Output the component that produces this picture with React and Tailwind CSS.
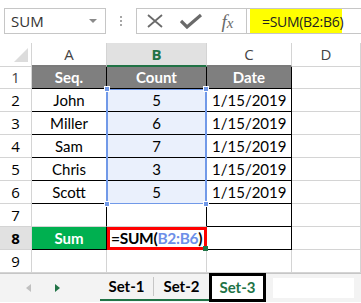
import React from 'react';

const COLS = ['A', 'B', 'C', 'D'];

const data = [
  ['John', '5', '1/15/2019'],
  ['Miller', '6', '1/15/2019'],
  ['Sam', '7', '1/15/2019'],
  ['Chris', '3', '1/15/2019'],
  ['Scott', '5', '1/15/2019'],
];

// Top formula bar
const FormulaBar = () => (
  <div className="h-[43px] flex items-start pt-[8px] pl-[4px]">
    <div className="w-[102px] h-[26px] border border-[#c6c6c6] flex items-center justify-between pl-[6px] pr-[8px]">
      <span className="text-[15px] text-[#333] font-['Open_Sans',sans-serif]">SUM</span>
      <span className="w-0 h-0 border-l-[4px] border-r-[4px] border-t-[4px] border-l-transparent border-r-transparent border-t-[#8a8a8a]" />
    </div>
    <div className="w-[30px] h-[26px] flex flex-col items-center justify-center gap-[2px]">
      <span className="w-[2px] h-[2px] bg-[#a6a6a6]" />
      <span className="w-[2px] h-[2px] bg-[#a6a6a6]" />
      <span className="w-[2px] h-[2px] bg-[#a6a6a6]" />
    </div>
    <div className="flex-1 h-[26px] border border-r-0 border-[#c6c6c6] flex items-center">
      <div className="w-[36px] flex justify-center">
        <svg width="18" height="14" viewBox="0 0 18 14">
          <path d="M2 1 L16 13 M16 1 L2 13" stroke="#6a6a6a" strokeWidth="1.8" fill="none" />
        </svg>
      </div>
      <div className="w-[36px] flex justify-center">
        <svg width="22" height="16" viewBox="0 0 22 16">
          <path d="M1 8 L7 14 L21 2" stroke="#6a6a6a" strokeWidth="3.2" fill="none" />
        </svg>
      </div>
      <div className="w-[38px] h-full flex items-center justify-center border-r border-[#c6c6c6]">
        <span className="text-[19px] italic text-[#6a6a6a] font-['Liberation_Serif',serif] leading-none">
          f<span className="text-[15px]">x</span>
        </span>
      </div>
      <div className="ml-[3px] w-[92px] h-[24px] bg-[#ffff00] flex items-center pl-[12px]">
        <span className="text-[14px] text-[#222] font-['Open_Sans',sans-serif] tracking-[-0.3px] whitespace-nowrap">=SUM(B2:B6)</span>
      </div>
    </div>
  </div>
);

const cellBase = 'h-[23px] flex items-center justify-center text-[15px] text-black';

const App = () => {
  return (
    <div className="w-[361px] h-[303px] overflow-hidden bg-white font-['Lato',sans-serif]">
      <FormulaBar />

      <div className="relative">
        <div className="grid grid-cols-[32px_75px_100px_85px_69px]">
          {/* header row */}
          <div className="h-[24px] bg-white border-r border-b border-[#d4d4d4] flex items-end justify-end pr-[3px] pb-[4px]">
            <svg width="14" height="14" viewBox="0 0 14 14">
              <path d="M14 0 L14 14 L0 14 Z" fill="#dcdcdc" />
            </svg>
          </div>
          {COLS.map(c => (
            <div
              key={c}
              className={
                'h-[24px] flex items-center justify-center text-[15px] font-[\'Open_Sans\',sans-serif] border-r ' +
                (c === 'B'
                  ? 'bg-[#e1e1e1] text-[#217346] font-bold border-b-2 border-b-[#217346] border-r-[#d4d4d4]'
                  : c === 'D'
                  ? 'bg-white text-[#444] border-b border-[#d4d4d4]'
                  : 'bg-white text-[#444] border-b-2 border-b-[#7a7a7a] border-r-[#d4d4d4]')
              }
            >
              {c}
            </div>
          ))}

          {/* row 1 */}
          <div className="h-[22px] flex items-center justify-center text-[15px] text-[#444] font-['Open_Sans',sans-serif] border-r border-b border-[#d4d4d4]">1</div>
          <div className="h-[22px] flex items-center justify-center bg-[#7f7f7f] text-white font-bold text-[15px] border-r border-b border-black">Seq.</div>
          <div className="h-[22px] flex items-center justify-center bg-[#7f7f7f] text-white font-bold text-[15px] border-r border-b border-black">Count</div>
          <div className="h-[22px] flex items-center justify-center bg-[#7f7f7f] text-white font-bold text-[15px] border-r border-b border-black">Date</div>
          <div className="h-[22px] border-r border-b border-[#d4d4d4]" />

          {data.map((row, i) => (
            <React.Fragment key={i}>
              <div className={cellBase + " text-[#444] font-['Open_Sans',sans-serif] border-r border-b border-[#d4d4d4]"}>{i + 2}</div>
              <div className={cellBase + ' border-r border-b border-black'}>{row[0]}</div>
              <div className={cellBase + ' bg-[#eaf0fc] border-r border-b border-black'}>{row[1]}</div>
              <div className={'h-[23px] flex items-center pl-[5px] text-[15px] text-black border-r border-b border-black'}>{row[2]}</div>
              <div className="h-[23px] border-r border-b border-[#d4d4d4]" />
            </React.Fragment>
          ))}

          {/* row 7 */}
          <div className={cellBase + " text-[#444] font-['Open_Sans',sans-serif] border-r border-b border-[#d4d4d4]"}>7</div>
          <div className="h-[23px] border-r border-b border-r-black border-b-[#d4d4d4]" />
          <div className="h-[23px] border-r border-b border-r-black border-b-[#d4d4d4]" />
          <div className="h-[23px] border-r border-b border-black" />
          <div className="h-[23px] border-r border-b border-[#d4d4d4]" />

          {/* row 8 */}
          <div className={cellBase + " bg-[#e1e1e1] text-[#217346] font-bold font-['Open_Sans',sans-serif] border-r border-b border-[#d4d4d4]"}>8</div>
          <div className={cellBase + ' bg-[#00b050] text-white font-bold border-r border-b border-black'}>Sum</div>
          <div className="h-[23px] border-[3px] border-[#ff0000] flex items-center pl-[1px] text-[15.5px] font-bold text-black whitespace-nowrap tracking-[-0.3px] relative">
            =SUM(<span className="text-[#6d8fe8]">B2:B6</span>)
            <span className="absolute right-[-4px] bottom-[-4px] w-[5px] h-[5px] bg-[#217346]" />
          </div>
          <div className="h-[23px] border-r border-b border-black" />
          <div className="h-[23px] border-r border-b border-[#d4d4d4]" />

          {/* row 9 */}
          <div className={cellBase + " text-[#444] font-['Open_Sans',sans-serif] border-r border-b border-[#d4d4d4]"}>9</div>
          <div className="h-[23px] border-r border-b border-[#d4d4d4]" />
          <div className="h-[23px] border-r border-b border-[#d4d4d4]" />
          <div className="h-[23px] border-r border-b border-[#d4d4d4]" />
          <div className="h-[23px] border-r border-b border-[#d4d4d4]" />
        </div>

        {/* selection overlay B2:B6 */}
        <div className="absolute left-[106px] top-[46px] w-[101px] h-[115px] border-y border-x-2 border-[#7199e8] pointer-events-none">
          <span className="absolute left-[-4px] top-[-4px] w-[6px] h-[6px] bg-[#7199e8] border border-white" />
          <span className="absolute right-[-4px] top-[-4px] w-[6px] h-[6px] bg-[#7199e8] border border-white" />
          <span className="absolute left-[-4px] bottom-[-4px] w-[6px] h-[6px] bg-[#7199e8] border border-white" />
          <span className="absolute right-[-4px] bottom-[-4px] w-[6px] h-[6px] bg-[#7199e8] border border-white" />
        </div>
      </div>

      {/* sheet tabs */}
      <div className="h-[29px] bg-[#f3f3f3] border-t border-[#c6c6c6] flex items-stretch">
        <div className="w-[100px] flex items-center">
          <span className="ml-[26px] w-0 h-0 border-t-[4px] border-b-[4px] border-r-[5px] border-t-transparent border-b-transparent border-r-[#c0c0c0]" />
          <span className="ml-[24px] w-0 h-0 border-t-[4px] border-b-[4px] border-l-[5px] border-t-transparent border-b-transparent border-l-[#217346]" />
        </div>
        <div className="w-[109px] flex border-b-2 border-[#217346] mb-[1px]">
          <div className="w-[54px] flex items-center justify-center text-[15px] font-bold text-black border-r border-[#c6c6c6] my-[3px]">Set-1</div>
          <div className="w-[55px] flex items-center justify-center text-[15px] font-bold text-black">Set-2</div>
        </div>
        <div className="w-[57px] -mt-[1px] flex items-center justify-center text-[15px] font-bold text-[#217346] bg-white border-[3px] border-black">Set-3</div>
        <div className="ml-[7px] my-[4px] w-[81px] bg-white" />
      </div>
    </div>
  );
};

export default App;
